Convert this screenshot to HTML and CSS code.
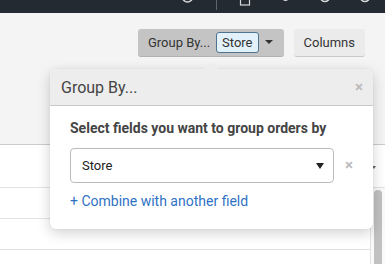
FILE: index.html
```html
<!DOCTYPE html>
<html>

<head>
    <title>Orders - Group By</title>

    <link rel="stylesheet" href="styles.css">
</head>

<body>

    <nav class="topnav">
        <svg class="topnav-icons" width="385" height="13" viewBox="0 0 385 13">
            <circle cx="187.5" cy="-3" r="5" fill="none" stroke="#d4d7da" stroke-width="1.6" />
            <line x1="216.5" y1="0" x2="216.5" y2="10" stroke="#5d646b" stroke-width="1" />
            <rect x="240.5" y="-6" width="9" height="11" fill="none" stroke="#d4d7da" stroke-width="1.2" />
            <circle cx="285.5" cy="-2" r="3" fill="#d4d7da" />
            <circle cx="325" cy="-3" r="4.5" fill="none" stroke="#d4d7da" stroke-width="1.6" />
            <circle cx="365" cy="-3" r="4.5" fill="none" stroke="#d4d7da" stroke-width="1.6" />
        </svg>
    </nav>

    <div class="toolbar">
        <button class="btn btn-active">
            Group By...
            <span class="tag">Store</span>
            <span class="caret"></span>
        </button>
        <button class="btn">Columns</button>
    </div>

    <div class="table">
        <div class="table-head">
            <span class="sort-caret"></span>
        </div>
        <div class="table-body">
            <div class="rows">
                <div class="row"></div>
                <div class="row"></div>
                <div class="row"></div>
            </div>
            <div class="scrollbar">
                <div class="thumb"></div>
            </div>
        </div>
    </div>

    <div class="popover">
        <div class="popover-header">
            <span class="popover-title">Group By...</span>
            <span class="close">&times;</span>
        </div>
        <div class="popover-body">
            <div class="popover-label">Select fields you want to group orders by</div>
            <div class="field-row">
                <div class="select">
                    <span>Store</span>
                    <span class="select-caret"></span>
                </div>
                <span class="close close-field">&times;</span>
            </div>
            <a href="#" class="add-link">+ Combine with another field</a>
        </div>
    </div>

</body>

</html>
```

FILE: styles.css
```css
* {
    margin: 0;
    padding: 0;
    box-sizing: border-box;
}

html,
body {
    width: 100%;
    height: 100%;
}

body {
    display: flex;
    flex-direction: column;
    font-family: Roboto, "Liberation Sans", sans-serif;
    font-size: 13px;
    color: #333;
    background-color: #f4f4f4;
    overflow: hidden;
    position: relative;
}

.topnav {
    flex: none;
    height: 13px;
    background-color: #232a31;
    overflow: hidden;
}

.topnav-icons {
    display: block;
}

.toolbar {
    flex: none;
    display: flex;
    justify-content: flex-end;
    align-items: flex-start;
    gap: 10px;
    height: 132px;
    padding: 16px 20px 0 0;
    border-bottom: 1px solid #cbcbcb;
}

.btn {
    display: inline-flex;
    align-items: center;
    height: 28px;
    padding: 0 10px;
    font-family: inherit;
    font-size: 13px;
    color: #333;
    background-color: #ebebeb;
    border: none;
    border-bottom: 1px solid #c9c9c9;
    border-radius: 3px;
}

.btn-active {
    padding-right: 11px;
    background-color: #c4c4c4;
    border-bottom-color: #b3b3b3;
}

.tag {
    display: inline-flex;
    align-items: center;
    height: 21px;
    margin-left: 6px;
    padding: 0 5px;
    background-color: #e3f1fb;
    border: 1px solid #4f7490;
    border-radius: 3px;
}

.caret {
    width: 0;
    height: 0;
    margin-left: 6px;
    margin-top: -2px;
    border-left: 4px solid transparent;
    border-right: 4px solid transparent;
    border-top: 4px solid #333;
}

.table {
    flex: 1;
    min-height: 0;
    overflow: hidden;
    display: flex;
    flex-direction: column;
    background-color: #fff;
}

.table-head {
    flex: none;
    display: flex;
    justify-content: flex-end;
    align-items: center;
    height: 43px;
    padding-right: 9px;
    border-bottom: 1px solid #e3e3e3;
}

.sort-caret {
    width: 0;
    height: 0;
    margin-top: 2px;
    border-left: 2px solid transparent;
    border-right: 2px solid transparent;
    border-top: 3px solid #666;
}

.table-body {
    flex: 1;
    min-height: 0;
    display: flex;
}

.rows {
    flex: 1;
}

.row {
    height: 31px;
    border-bottom: 1px solid #e3e3e3;
}

.scrollbar {
    width: 15px;
    padding: 2px 3px 0 3px;
    border-left: 1px solid #e3e3e3;
    background-color: #fafafa;
}

.thumb {
    height: 90px;
    background-color: #c1c1c1;
    border-radius: 4px;
}

/* popover lies over the toolbar and table */
.popover {
    position: absolute;
    left: 50px;
    top: 69px;
    width: 323px;
    background-color: #fff;
    border-radius: 6px;
    box-shadow: 0 4px 14px rgba(0, 0, 0, 0.18), 0 0 2px rgba(0, 0, 0, 0.08);
}

.popover::before {
    content: "";
    position: absolute;
    left: 154px;
    top: -7px;
    border-left: 7px solid transparent;
    border-right: 7px solid transparent;
    border-bottom: 7px solid #ededed;
}

.popover-header {
    display: flex;
    justify-content: space-between;
    align-items: center;
    height: 37px;
    padding: 0 10px 0 11px;
    background-color: #ededed;
    border-bottom: 1px solid #c9c9c9;
    border-radius: 6px 6px 0 0;
}

.popover-title {
    font-size: 16px;
    color: #444;
}

.close {
    font-size: 15px;
    font-weight: bold;
    color: #bcbcbc;
    line-height: 1;
}

.popover-body {
    padding: 14px 20px 20px 20px;
}

.popover-label {
    font-size: 14px;
    font-weight: bold;
    color: #444;
    line-height: 16px;
}

.field-row {
    display: flex;
    align-items: center;
    gap: 11px;
    margin-top: 12px;
}

.select {
    flex: 1;
    display: flex;
    justify-content: space-between;
    align-items: center;
    height: 35px;
    padding: 0 9px 0 11px;
    color: #222;
    border: 1px solid #bbb;
    border-radius: 4px;
}

.select-caret {
    width: 0;
    height: 0;
    border-left: 4px solid transparent;
    border-right: 4px solid transparent;
    border-top: 6px solid #222;
}

.close-field {
    width: 8px;
}

.add-link {
    display: block;
    margin-top: 10px;
    font-size: 14px;
    line-height: 16px;
    color: #2f72c4;
    text-decoration: none;
}
```
